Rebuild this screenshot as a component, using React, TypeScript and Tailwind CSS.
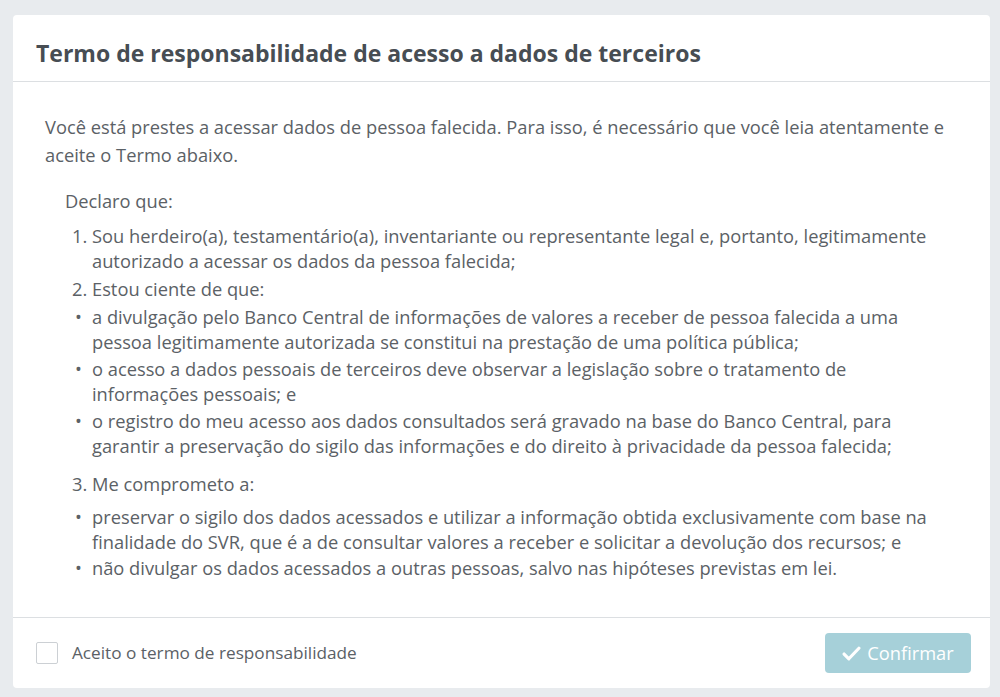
import React from 'react'

const Bullet: React.FC<{ children: React.ReactNode; className?: string }> = ({ children, className }) => (
  <li className={`flex ${className ?? ''}`}>
    <span className="w-[20px] shrink-0 pl-[3px]">•</span>
    <span>{children}</span>
  </li>
)

const Numbered: React.FC<{ n: string; children: React.ReactNode; className?: string }> = ({ n, children, className }) => (
  <li className={`flex ${className ?? ''}`}>
    <span className="w-[20px] shrink-0">{n}</span>
    <span>{children}</span>
  </li>
)

export default function App() {
  return (
    <div className="min-h-[697px] bg-[#e8ebee] pt-[15px] px-[13px] pb-[10px] font-['Open_Sans',sans-serif] text-[#5b6166]">
      <div className="w-[977px] bg-white rounded-[4px]">
        <div className="h-[67px] flex items-center px-[23px] pt-[11px] border-b border-[#dcdfe2]">
          <h1 className="text-[23px] font-bold text-[#474d53]">
            Termo de responsabilidade de acesso a dados de terceiros
          </h1>
        </div>

        <div className="pl-[32px] pr-[32px] pt-[31px] pb-[37px] text-[18.3px] leading-[28px] border-b border-[#dcdfe2]">
          <p>
            Você está prestes a acessar dados de pessoa falecida. Para isso, é necessário que você leia atentamente e
            aceite o Termo abaixo.
          </p>

          <div className="pl-[20px] pr-[10px] mt-[18px]">
            <p>Declaro que:</p>
            <div className="pl-[7px] leading-[25px]">
              <ol className="mt-[8px]">
                <Numbered n="1.">
                  Sou herdeiro(a), testamentário(a), inventariante ou representante legal e, portanto, legitimamente
                  autorizado a acessar os dados da pessoa falecida;
                </Numbered>
                <Numbered n="2." className="mt-[3px]">Estou ciente de que:</Numbered>
              </ol>
              <ul>
                <Bullet className="mt-[3px]">
                  a divulgação pelo Banco Central de informações de valores a receber de pessoa falecida a uma pessoa
                  legitimamente autorizada se constitui na prestação de uma política pública;
                </Bullet>
                <Bullet className="mt-[2px]">
                  o acesso a dados pessoais de terceiros deve observar a legislação sobre o tratamento de informações
                  pessoais; e
                </Bullet>
                <Bullet className="mt-[2px]">
                  o registro do meu acesso aos dados consultados será gravado na base do Banco Central, para garantir a
                  preservação do sigilo das informações e do direito à privacidade da pessoa falecida;
                </Bullet>
              </ul>
              <ol className="mt-[13px]">
                <Numbered n="3.">Me comprometo a:</Numbered>
              </ol>
              <ul className="mt-[8px]">
                <Bullet>
                  preservar o sigilo dos dados acessados e utilizar a informação obtida exclusivamente com base na
                  finalidade do SVR, que é a de consultar valores a receber e solicitar a devolução dos recursos; e
                </Bullet>
                <Bullet className="mt-[1px]">
                  não divulgar os dados acessados a outras pessoas, salvo nas hipóteses previstas em lei.
                </Bullet>
              </ul>
            </div>
          </div>
        </div>

        <div className="h-[70px] flex items-center justify-between pl-[23px] pr-[19px]">
          <label className="flex items-center gap-[14px] text-[17.2px]">
            <span className="w-[22px] h-[22px] border border-[#ccd0d4] rounded-[2px] bg-white" />
            <span>Aceito o termo de responsabilidade</span>
          </label>
          <button
            disabled
            className="h-[40px] w-[146px] rounded-[4px] bg-[#a6d0d9] text-white text-[18.3px] flex items-center justify-center gap-[6px]"
          >
            <svg width="19" height="15" viewBox="0 0 18 14" fill="none">
              <path d="M2 7.5 L6.5 12 L16 2" stroke="white" strokeWidth="3" strokeLinecap="round" strokeLinejoin="round" />
            </svg>
            Confirmar
          </button>
        </div>
      </div>
    </div>
  )
}
